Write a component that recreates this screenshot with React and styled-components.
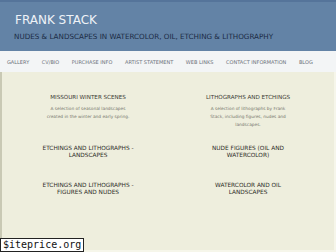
import styled, { createGlobalStyle } from 'styled-components';

const GlobalStyle = createGlobalStyle`
  html, body { margin: 0; padding: 0; }
  body {
    width: 336px;
    height: 252px;
    overflow: hidden;
    background: #eeeedd;
    font-family: "DejaVu Sans", Verdana, sans-serif;
  }
`;

const navItems = [
  'GALLERY',
  'CV/BIO',
  'PURCHASE INFO',
  'ARTIST STATEMENT',
  'WEB LINKS',
  'CONTACT INFORMATION',
  'BLOG',
];

const galleries = [
  {
    title: 'MISSOURI WINTER SCENES',
    desc: ['A selection of seasonal landscapes', 'created in the winter and early spring.'],
  },
  {
    title: 'LITHOGRAPHS AND ETCHINGS',
    desc: ['A selection of lithographs by Frank', 'Stack, including figures, nudes and', 'landscapes.'],
  },
  { title: ['ETCHINGS AND LITHOGRAPHS -', 'LANDSCAPES'] },
  { title: ['NUDE FIGURES (OIL AND', 'WATERCOLOR)'] },
  { title: ['ETCHINGS AND LITHOGRAPHS -', 'FIGURES AND NUDES'] },
  { title: ['WATERCOLOR AND OIL', 'LANDSCAPES'] },
];

export default function App() {
  return (
    <Page>
      <GlobalStyle />
      <Header>
        <SiteName>FRANK STACK</SiteName>
        <Tagline>NUDES &amp; LANDSCAPES IN WATERCOLOR, OIL, ETCHING &amp; LITHOGRAPHY</Tagline>
      </Header>
      <Nav>
        {navItems.map(item => (
          <NavLink key={item}>{item}</NavLink>
        ))}
      </Nav>
      <Main>
        <Grid>
          {galleries.map((g, i) => (
            <Card key={i}>
              {Array.isArray(g.title) ? (
                <BigTitle>
                  {g.title.map(line => <div key={line}>{line}</div>)}
                </BigTitle>
              ) : (
                <Title>{g.title}</Title>
              )}
              {g.desc && (
                <Desc>
                  {g.desc.map(line => <div key={line}>{line}</div>)}
                </Desc>
              )}
            </Card>
          ))}
        </Grid>
      </Main>
      <Badge>$iteprice.org</Badge>
    </Page>
  );
}

const Page = styled.div`
  position: relative;
  width: 336px;
  height: 252px;
  display: flex;
  flex-direction: column;
`;

const Header = styled.header`
  height: 51px;
  box-sizing: border-box;
  background: #6383a6;
  border-top: 2px solid #55749a;
  padding: 11px 0 0 15px;
`;

const SiteName = styled.h1`
  margin: 0;
  font-size: 12px;
  line-height: 14px;
  font-weight: normal;
  color: #eef2f7;
`;

const Tagline = styled.h2`
  margin: 6px 0 0 -1px;
  font-size: 7.2px;
  line-height: 8px;
  font-weight: normal;
  color: #1b2b45;
  white-space: nowrap;
`;

const Nav = styled.nav`
  height: 21px;
  background: #f3f5f6;
  display: flex;
  align-items: center;
  padding: 0 0 0 7px;
  gap: 12.6px;
`;

const NavLink = styled.span`
  font-size: 5px;
  color: #6c717a;
  white-space: nowrap;
`;

const Main = styled.main`
  flex: 1;
  background: #eeeedd;
  border-left: 2px solid #c9c9b4;
  border-right: 2px solid #f6f6ea;
  border-bottom: 2px solid #f6f6ea;
  padding: 21px 6px 0 6px;
`;

const Grid = styled.div`
  display: grid;
  grid-template-columns: 160px 160px;
`;

const Card = styled.div`
  min-height: 37px;
  box-sizing: border-box;
  padding-bottom: 16px;
  text-align: center;
`;

const Title = styled.div`
  font-size: 5.6px;
  line-height: 8px;
  color: #3a3a34;
  white-space: nowrap;
`;

const BigTitle = styled.div`
  font-size: 5.8px;
  line-height: 7px;
  color: #2e2e2a;
  white-space: nowrap;
`;

const Desc = styled.div`
  margin-top: 4px;
  font-size: 4.3px;
  line-height: 8px;
  color: #76766c;
  white-space: nowrap;
`;

const Badge = styled.div`
  position: absolute;
  left: 0;
  bottom: 0;
  background: #fff;
  border: 1px solid #222;
  padding: 0 2px;
  font-family: "DejaVu Sans Mono", monospace;
  font-size: 10px;
  line-height: 12px;
  color: #111;
`;
